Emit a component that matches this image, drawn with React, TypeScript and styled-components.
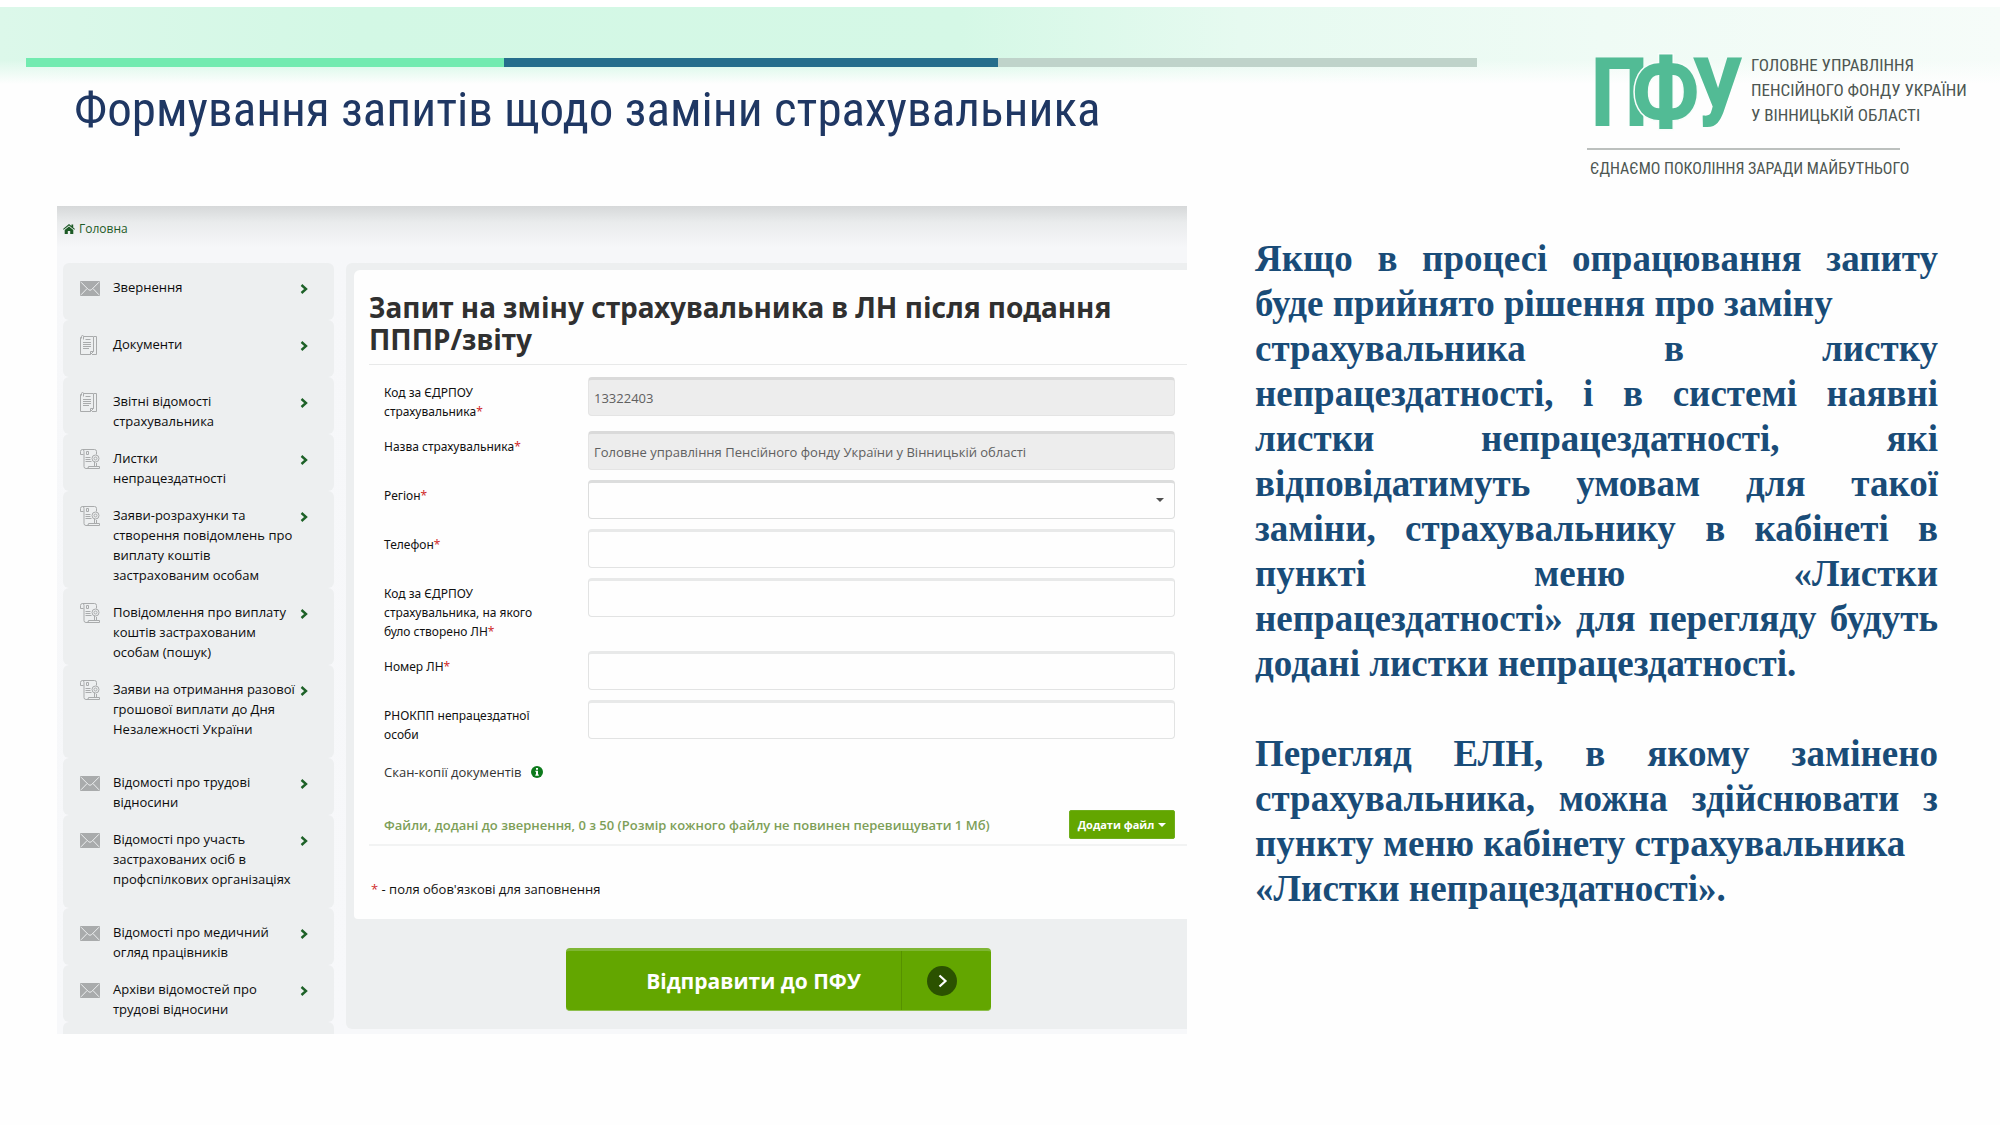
import React from "react";
import styled, { createGlobalStyle } from "styled-components";

const GlobalStyle = createGlobalStyle`
  *, *::before, *::after { box-sizing: border-box; }
  body { margin: 0; background: #fefefe; }
  button, input, select { font: inherit; }
`;

const ui = `"Open Sans", "Noto Sans", sans-serif`;
const narrow = `"Liberation Sans Narrow", "Arial Narrow", "Roboto Condensed", "Liberation Sans", sans-serif`;

const Slide = styled.div`
  min-height: 100vh;
  color: #111;
  font-family: ${ui};
  font-size: 13px;
`;

const Header = styled.header`
  display: flex;
  align-items: flex-start;
  gap: 110px;
  min-height: 206px;
  padding: 0 32px 0 26px;
  background:
    linear-gradient(to bottom, #fff 7px, transparent 7px, transparent 60px, #fefefe 84px),
    linear-gradient(to right, #dcf8ea 0, #d3f8e5 18%, #d5f8e6 48%, #e6faf0 62%, #effbf5 80%, #f6fcf9 100%);
`;

const HeaderMain = styled.div`
  flex: 1;
  min-width: 0;
  padding-top: 58px;
`;

const Stripe = styled.div`
  display: flex;
  height: 9px;
`;

const StripePart = styled.span<{ $tone: string; $share: number }>`
  flex: ${(p) => p.$share};
  background: ${(p) => p.$tone};
`;

const Title = styled.h1`
  margin: 11px 0 0 48px;
  color: #1f3763;
  font: 400 49px/64px ${narrow};
  white-space: nowrap;
`;

const Brand = styled.div`
  flex: 0 0 381px;
  padding-top: 44px;
  color: #4d5652;
  font: 400 17px/25px ${narrow};
  white-space: nowrap;
`;

const BrandTop = styled.div`
  display: flex;
  align-items: center;
  gap: 8px;
  height: 92px;
`;

const BrandMark = styled.svg`
  display: block;
  flex: none;
  width: 156px;
  height: 92px;
  overflow: visible;
  font: 700 96px ${narrow};
  fill: #52bb95;
`;

const BrandRule = styled.hr`
  width: 313px;
  height: 2px;
  margin: 12px 0 6px;
  border: 0;
  background: #bcc0be;
`;

const Tagline = styled.div`
  padding-left: 3px;
  font-size: 16px;
`;

const Content = styled.main`
  display: grid;
  grid-template-columns: minmax(0, 1130fr) minmax(0, 683fr);
  gap: 68px;
  align-items: start;
  padding: 0 62px 0 57px;
`;

const Portal = styled.section`
  background: linear-gradient(to bottom, #d6d8d9 0, #e9ebec 16px, #f6f7f9 42px, #f7f8fa 100%) no-repeat;
`;

const Breadcrumb = styled.nav`
  display: flex;
  height: 57px;
  padding: 13px 0 0 6px;
`;

const HomeLink = styled.a`
  display: flex;
  align-items: center;
  gap: 4px;
  height: 20px;
  color: #1d5a26;
  font-size: 12px;
  line-height: 20px;
  text-decoration: none;
`;

const PortalBody = styled.div`
  display: grid;
  grid-template-columns: 271px minmax(0, 1fr);
  gap: 12px;
  padding-left: 6px;
`;

const MenuList = styled.ul`
  margin: 0;
  padding: 0;
  list-style: none;
`;

const MenuItem = styled.li<{ $roomy?: boolean }>`
  min-height: 57px;
  padding: 14px 25px ${(p) => (p.$roomy ? 19 : 3)}px 17px;
  border-radius: 6px;
  background: #edeff0;
`;

const MenuStub = styled.li`
  height: 12px;
  border-radius: 6px 6px 0 0;
  background: #edeff0;
`;

const MenuLink = styled.a`
  display: grid;
  grid-template-columns: 20px minmax(0, 1fr) 9px;
  column-gap: 13px;
  color: #0c0c0c;
  line-height: 20px;
  text-decoration: none;
  white-space: nowrap;
`;

const Line = styled.span`
  display: block;
`;

const IconCell = styled.span`
  display: flex;
  align-items: flex-start;
  height: 20px;
  padding-top: 1px;
  color: #a9abac;
`;

const ArrowCell = styled.span`
  display: flex;
  align-items: center;
  height: 24px;
  color: #1d6127;
`;

const Workspace = styled.div`
  align-self: start;
  padding: 7px 0 18px 8px;
  border-radius: 6px 0 0 6px;
  background: #edeff0;
`;

const Card = styled.div`
  padding: 21px 0 20px 15px;
  border-radius: 6px 0 0 4px;
  background: #fefefe;
`;

const CardTitle = styled.h2`
  margin: 0 0 12px;
  padding-bottom: 9px;
  border-bottom: 1px solid #e8e9e9;
  color: #303030;
  font: 700 28px/32px "Noto Sans", "Open Sans", sans-serif;
`;

const Rows = styled.div`
  padding: 0 12px 0 15px;
`;

const Row = styled.div`
  display: grid;
  grid-template-columns: 204px minmax(0, 1fr);
  align-items: start;
  padding-bottom: 10px;
`;

const Label = styled.label`
  padding-top: 6px;
  font-family: "Noto Sans", "Open Sans", sans-serif;
  font-size: 12px;
  line-height: 19px;
`;

const Star = styled.span`
  color: #d02c2c;
`;

const Field = styled.input`
  width: 100%;
  height: 39px;
  padding: 0 5px;
  border: 1px solid #e2e3e3;
  border-top: 3px solid #e8e9e9;
  border-radius: 4px;
  background: #fefefe;
  color: #606060;
  font-size: 13px;

  &:disabled {
    border-color: #e4e4e4;
    border-top-color: #dadada;
    background: #ededed;
    color: #606060;
  }
`;

const SelectBox = styled.div`
  display: grid;
  align-items: center;

  & > * {
    grid-area: 1 / 1;
  }

  & > svg {
    justify-self: end;
    margin-right: 11px;
    color: #505050;
    pointer-events: none;
  }
`;

const Select = styled(Field).attrs({ as: "select" })`
  border-color: #dcdddd;
  appearance: none;
`;

const ScanRow = styled.div`
  display: flex;
  align-items: center;
  gap: 9px;
  height: 20px;
  margin-top: 8px;
  color: #333;
  font-size: 13px;
`;

const InfoButton = styled.button`
  display: flex;
  padding: 0;
  border: 0;
  background: none;
  color: #0d7a1c;
`;

const FilesRow = styled.div`
  display: flex;
  align-items: center;
  justify-content: space-between;
  margin-top: 28px;
  padding: 0 12px 5px 15px;
  border-bottom: 2px solid #f2f3f3;
`;

const FilesText = styled.span`
  color: #7d9f58;
  font-size: 13px;
  font-weight: 600;
`;

const AddFile = styled.button`
  display: flex;
  align-items: center;
  justify-content: center;
  gap: 4px;
  width: 106px;
  height: 29px;
  padding: 0;
  border: 1px solid #6fae1c;
  border-radius: 2px;
  background: #63a600;
  color: #fff;
  font-size: 11px;
  font-weight: 700;
  white-space: nowrap;
`;

const Note = styled.p`
  margin: 33px 0 0 2px;
  font-size: 13px;
  line-height: 20px;
`;

const SubmitRow = styled.div`
  display: flex;
  justify-content: center;
  padding: 29px 0 0 16px;
`;

const Submit = styled.button`
  display: grid;
  grid-template-columns: minmax(0, 1fr) 90px;
  align-items: stretch;
  width: 425px;
  height: 63px;
  padding: 0;
  overflow: hidden;
  border: 0;
  border-top: 3px solid #7fb635;
  border-bottom: 1px solid #8dbf4b;
  border-radius: 4px;
  background: #63a600;
  color: #fff;
  font-size: 21px;
  font-weight: 700;
`;

const SubmitText = styled.span`
  display: flex;
  align-items: center;
  justify-content: center;
  padding-left: 40px;
`;

const SubmitArrow = styled.span`
  display: flex;
  align-items: center;
  padding-left: 25px;
  border-left: 1px solid #569100;
`;

const Explain = styled.article`
  padding-top: 30px;
  color: #194c78;
  font: 700 37px/45px "Liberation Serif", "Times New Roman", serif;
`;

const Para = styled.p<{ $full?: boolean; $gap?: boolean }>`
  margin: ${(p) => (p.$gap ? 45 : 0)}px 0 0;
  text-align: justify;
  text-align-last: ${(p) => (p.$full ? "justify" : "left")};
`;

const Envelope = () => (
  <svg width="20" height="18" viewBox="0 -3 20 18" aria-hidden="true">
    <rect width="20" height="15" rx="1" fill="currentColor" />
    <path d="M1 1.2 8.4 8.6Q10 10 11.6 8.6L19 1.2M1 13.8 7 7.6M19 13.8 13 7.6" fill="none" stroke="#edeff0" strokeWidth="1" />
  </svg>
);

const Papers = () => (
  <svg width="17" height="20" viewBox="0 0 17 20" fill="none" stroke="currentColor" aria-hidden="true">
    <path d="M3.5 1.5h10v15l-3 3H.5v-17h1M10.5 19.5v-3h3M14 1.5h2.5v18H12" />
    <path d="M1.5 3.5v-2q0-1 1-1t1 1v3M5.5 4.500h5M3 7.500h8M3 9.500h8M3 11.500h8M3 13.500h6" />
  </svg>
);

const Scroll = () => (
  <svg width="20" height="20" viewBox="0 0 20 20" fill="none" stroke="currentColor" aria-hidden="true">
    <path d="M3.5 5.5h-3v-3q0-2 2-2h12q2 0 2 2v3M2.500.5q1.500 0 1.500 2v15q0 2 2 2h13.500v-2h-11q0 2-1.500 2M16.500 14v3.500" />
    <circle cx="15.500" cy="9.500" r="3.500" />
    <circle cx="15.500" cy="9.500" r="1.500" />
    <path d="M6.500 2.500h2v3h-2zM5.500 8.500h5M5.500 10.500h5M5.500 12.500h6M14.500 13v4" />
  </svg>
);

const Chevron = () => (
  <svg width="8" height="10" viewBox="0 0 8 10" aria-hidden="true">
    <path d="M1.500 1 6 5 1.500 9" fill="none" stroke="currentColor" strokeWidth="2.400" />
  </svg>
);

const Home = () => (
  <svg width="12" height="10" viewBox="0 0 12 10" fill="currentColor" aria-hidden="true">
    <path d="M6 0 8.500 2.100V.6h1.700v2.900L12 5l-.7.8L6 1.500.7 5.800 0 5z" />
    <path d="M6 2.400 10.300 6v4H7.200V7H4.800v3H1.700V6z" />
  </svg>
);

const Caret = () => (
  <svg width="8" height="4" viewBox="0 0 8 4" fill="currentColor" aria-hidden="true">
    <path d="M0 0h8L4 4z" />
  </svg>
);

const icons = { mail: Envelope, papers: Papers, scroll: Scroll };

const menu: { icon: keyof typeof icons; lines: string[]; roomy?: boolean }[] = [
  { icon: "mail", lines: ["Звернення"] },
  { icon: "papers", lines: ["Документи"] },
  { icon: "papers", lines: ["Звітні відомості", "страхувальника"] },
  { icon: "scroll", lines: ["Листки", "непрацездатності"] },
  { icon: "scroll", lines: ["Заяви-розрахунки та", "створення повідомлень про", "виплату коштів", "застрахованим особам"] },
  { icon: "scroll", lines: ["Повідомлення про виплату", "коштів застрахованим", "особам (пошук)"] },
  { icon: "scroll", lines: ["Заяви на отримання разової", "грошової виплати до Дня", "Незалежності України"], roomy: true },
  { icon: "mail", lines: ["Відомості про трудові", "відносини"] },
  { icon: "mail", lines: ["Відомості про участь", "застрахованих осіб в", "профспілкових організаціях"], roomy: true },
  { icon: "mail", lines: ["Відомості про медичний", "огляд працівників"] },
  { icon: "mail", lines: ["Архіви відомостей про", "трудові відносини"] },
];

const fields: { id: string; lines: string[]; required?: boolean; value?: string; select?: boolean }[] = [
  { id: "edrpou", lines: ["Код за ЄДРПОУ", "страхувальника"], required: true, value: "13322403" },
  { id: "name", lines: ["Назва страхувальника"], required: true, value: "Головне управління Пенсійного фонду України у Вінницькій області" },
  { id: "region", lines: ["Регіон"], required: true, select: true },
  { id: "phone", lines: ["Телефон"], required: true },
  { id: "target", lines: ["Код за ЄДРПОУ", "страхувальника, на якого", "було створено ЛН"], required: true },
  { id: "number", lines: ["Номер ЛН"], required: true },
  { id: "rnokpp", lines: ["РНОКПП непрацездатної", "особи"] },
];

export default function App() {
  return (
    <Slide>
      <GlobalStyle />
      <Header>
        <HeaderMain>
          <Stripe>
            <StripePart $tone="#72ebb0" $share={478} />
            <StripePart $tone="#256e8c" $share={494} />
            <StripePart $tone="#bfd3ca" $share={479} />
          </Stripe>
          <Title>Формування запитів щодо заміни страхувальника</Title>
        </HeaderMain>
        <Brand>
          <BrandTop>
            <BrandMark viewBox="0 0 156 92" role="img" aria-label="ПФУ">
              <text x="3" y="82">П</text>
              <text x="104" y="82">У</text>
              <text x="44" y="82" stroke="#f8fdfb" strokeWidth="3" paintOrder="stroke">Ф</text>
            </BrandMark>
            <div>
              <Line>ГОЛОВНЕ УПРАВЛІННЯ</Line>
              <Line>ПЕНСІЙНОГО ФОНДУ УКРАЇНИ</Line>
              <Line>У ВІННИЦЬКІЙ ОБЛАСТІ</Line>
            </div>
          </BrandTop>
          <BrandRule />
          <Tagline>ЄДНАЄМО ПОКОЛІННЯ ЗАРАДИ МАЙБУТНЬОГО</Tagline>
        </Brand>
      </Header>

      <Content>
        <Portal>
          <Breadcrumb>
            <HomeLink href="#home"><Home />Головна</HomeLink>
          </Breadcrumb>
          <PortalBody>
            <MenuList>
              {menu.map((item) => {
                const Icon = icons[item.icon];
                return (
                  <MenuItem key={item.lines.join(" ")} $roomy={item.roomy}>
                    <MenuLink href="#menu">
                      <IconCell><Icon /></IconCell>
                      <span>{item.lines.map((l) => <Line key={l}>{l}</Line>)}</span>
                      <ArrowCell><Chevron /></ArrowCell>
                    </MenuLink>
                  </MenuItem>
                );
              })}
              <MenuStub />
            </MenuList>

            <Workspace>
              <Card>
                <CardTitle>
                  Запит на зміну страхувальника в ЛН після подання
                  <br />
                  ПППР/звіту
                </CardTitle>
                <Rows>
                  {fields.map((f) => (
                    <Row key={f.id}>
                      <Label htmlFor={f.id}>
                        {f.lines.map((l, i) => (
                          <Line key={l}>
                            {l}
                            {f.required && i === f.lines.length - 1 && <Star>*</Star>}
                          </Line>
                        ))}
                      </Label>
                      {f.select ? (
                        <SelectBox>
                          <Select id={f.id} />
                          <Caret />
                        </SelectBox>
                      ) : (
                        <Field id={f.id} type="text" defaultValue={f.value} disabled={!!f.value} />
                      )}
                    </Row>
                  ))}
                  <ScanRow>
                    Скан-копії документів
                    <InfoButton type="button" aria-label="Інформація">
                      <svg width="12" height="12" viewBox="0 0 12 12" aria-hidden="true">
                        <circle cx="6" cy="6" r="6" fill="currentColor" />
                        <path d="M5 2h2v1.700H5zM4.300 4.700H7V8.500h.8V9.700H4.300V8.500H5V5.800h-.7z" fill="#fff" />
                      </svg>
                    </InfoButton>
                  </ScanRow>
                </Rows>
                <FilesRow>
                  <FilesText>Файли, додані до звернення, 0 з 50 (Розмір кожного файлу не повинен перевищувати 1 Мб)</FilesText>
                  <AddFile type="button">Додати файл<Caret /></AddFile>
                </FilesRow>
                <Note><Star>*</Star> - поля обов'язкові для заповнення</Note>
              </Card>
              <SubmitRow>
                <Submit type="submit">
                  <SubmitText>Відправити до ПФУ</SubmitText>
                  <SubmitArrow>
                    <svg width="30" height="30" viewBox="0 0 30 30" aria-hidden="true">
                      <circle cx="15" cy="15" r="15" fill="#2b5200" />
                      <path d="M12.500 9.500 18.500 15l-6 5.500" fill="none" stroke="#fff" strokeWidth="2.200" />
                    </svg>
                  </SubmitArrow>
                </Submit>
              </SubmitRow>
            </Workspace>
          </PortalBody>
        </Portal>

        <Explain>
          <Para $full>Якщо в процесі опрацювання запиту</Para>
          <Para>буде прийнято рішення про заміну</Para>
          <Para $full>
            страхувальника в листку непрацездатності, і в системі наявні листки непрацездатності, які
            відповідатимуть умовам для такої заміни, страхувальнику в кабінеті в пункті меню «Листки
          </Para>
          <Para>непрацездатності» для перегляду будуть додані листки непрацездатності.</Para>
          <Para $gap>Перегляд ЕЛН, в якому замінено страхувальника, можна здійснювати з пункту меню кабінету страхувальника</Para>
          <Para>«Листки непрацездатності».</Para>
        </Explain>
      </Content>
    </Slide>
  );
}
